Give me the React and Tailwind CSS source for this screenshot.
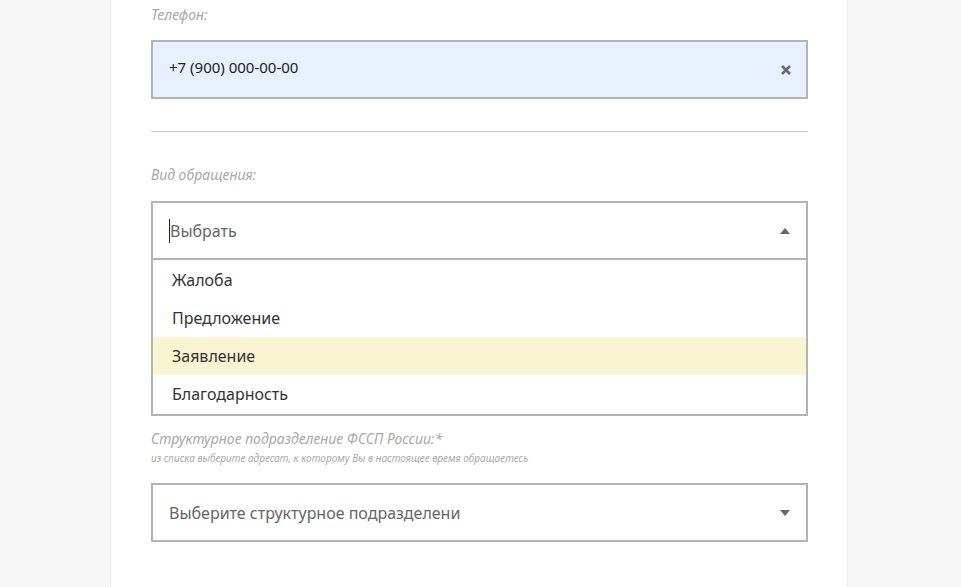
import React from 'react';

const items = ['Жалоба', 'Предложение', 'Заявление', 'Благодарность'];

export default function App() {
  return (
    <div className="h-[587px] overflow-hidden bg-[#f7f7f7] font-['Open_Sans',sans-serif]">
      <div className="ml-[110px] w-[738px] h-full bg-white border-x border-[#efefef] pl-[40px] pr-[39px]">
        <div className="pt-[4px] h-[40px] text-[14px] italic text-[#a8a8a8]">Телефон:</div>
        <div className="h-[59px] bg-[#e8f0fe] border-2 border-[#b3b3b3] flex items-center justify-between pl-[16px] pr-[14px] text-[15px] text-[#222]">
          <span className="-mt-[4px]">+7 (900) 000-00-00</span>
          <svg width="12" height="12" viewBox="0 0 12 12"><path d="M2 2L10 10M10 2L2 10" stroke="#6b6b6b" strokeWidth="2.6" /></svg>
        </div>
        <div className="mt-[32px] border-t border-[#c8c8c8]" />
        <div className="pt-[32px] h-[69px] text-[14px] italic text-[#a8a8a8]">Вид обращения:</div>
        <div className="relative">
          <div className="h-[59px] border-2 border-[#b3b3b3] flex items-center justify-between pl-[16px] pr-[16px] text-[16px] text-[#666]">
            <span className="border-l border-[#222]">Выбрать</span>
            <svg width="10" height="6" viewBox="0 0 10 6"><path d="M0 6L5 0L10 6Z" fill="#666" /></svg>
          </div>
          <div className="absolute left-0 right-0 top-[59px] bg-white border-2 border-t-0 border-[#b3b3b3] py-[1px] text-[16px] text-[#333]">
            {items.map((t) => (
              <div key={t} className={`h-[38px] flex items-center pl-[19px] ${t === 'Заявление' ? 'bg-[#f9f5d3]' : ''}`}>{t}</div>
            ))}
          </div>
        </div>
        <div className="mt-[168px] text-[14px] italic text-[#a8a8a8]">Структурное подразделение ФССП России:*</div>
        <div className="mt-[2px] text-[10px] italic text-[#a8a8a8]">из списка выберите адресат, к которому Вы в настоящее время обращаетесь</div>
        <div className="mt-[17px] h-[59px] border-2 border-[#b3b3b3] flex items-center justify-between pl-[16px] pr-[16px] text-[16px] text-[#666]">
          <span>Выберите структурное подразделени</span>
          <svg width="10" height="6" viewBox="0 0 10 6"><path d="M0 0L5 6L10 0Z" fill="#666" /></svg>
        </div>
      </div>
    </div>
  );
}
